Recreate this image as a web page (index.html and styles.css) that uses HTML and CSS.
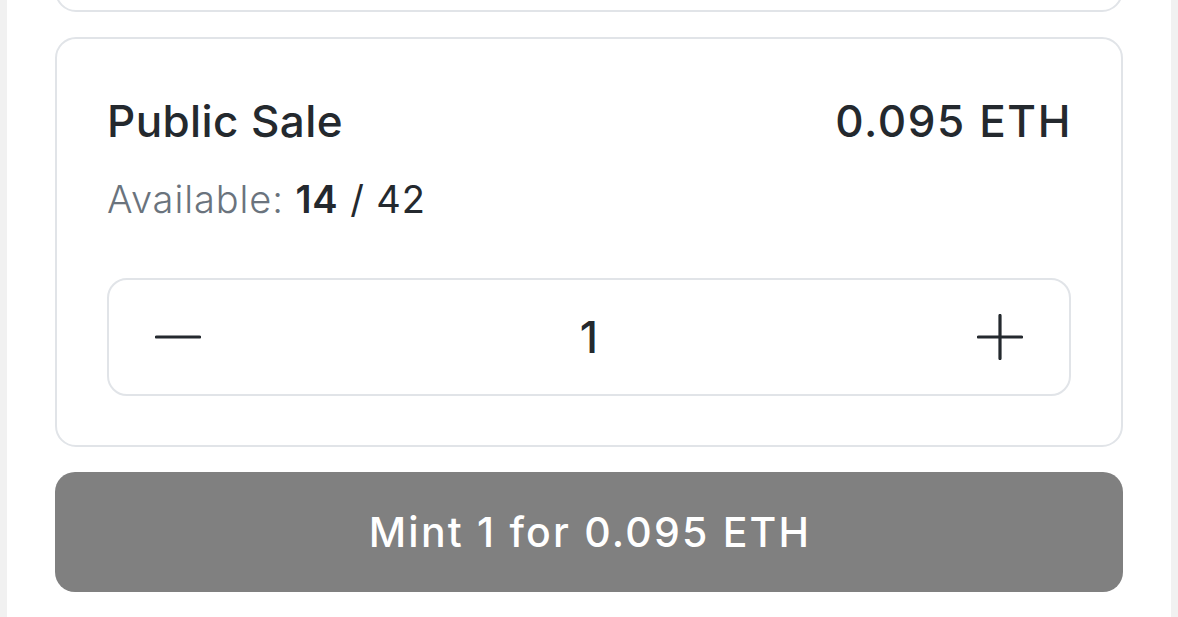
FILE: index.html
```html
<!DOCTYPE html>
<html lang="en">
<head>
<meta charset="utf-8">
<title>Public Sale</title>
<link rel="stylesheet" href="styles.css">
</head>
<body>
<div class="page">
  <div class="card card-prev"></div>
  <div class="card sale">
    <div class="sale-head">
      <div class="sale-title">Public Sale</div>
      <div class="sale-price">0.095 ETH</div>
    </div>
    <div class="avail"><span class="avail-label">Available:</span> <span class="avail-count">14</span> <span class="avail-total">/ 42</span></div>
    <div class="stepper">
      <button class="step-btn" aria-label="decrease">
        <svg width="46" height="46" viewBox="0 0 46 46"><path d="M1.5 23H44.5" stroke="#24292e" stroke-width="3.2" stroke-linecap="round" fill="none"/></svg>
      </button>
      <div class="step-value">1</div>
      <button class="step-btn" aria-label="increase">
        <svg width="46" height="46" viewBox="0 0 46 46"><path d="M1.5 23H44.5M23 1.5V44.5" stroke="#24292e" stroke-width="3.2" stroke-linecap="round" fill="none"/></svg>
      </button>
    </div>
  </div>
  <button class="mint">Mint 1 for 0.095 ETH</button>
</div>
</body>
</html>
```

FILE: styles.css
```css
html, body {
  margin: 0;
  padding: 0;
  background: #f1f1f1;
  height: 100%;
  overflow: hidden;
}
.page {
  margin: 0 7px;
  background: #ffffff;
  height: 100%;
  padding: 0 48px;
  display: flex;
  flex-direction: column;
  gap: 25px;
  font-family: Inter, "Noto Sans", sans-serif;
  color: #24292e;
}
.card {
  border: 2px solid #e1e4e8;
  border-radius: 21px;
  box-sizing: border-box;
}
.card-prev {
  margin-top: -100px;
  height: 112px;
  flex: none;
}
.sale {
  flex: none;
  padding: 56px 50px 49px;
}
.sale-head {
  display: flex;
  justify-content: space-between;
  align-items: baseline;
  font-size: 44px;
  line-height: 52px;
  font-weight: 500;
}
.sale-title {
  letter-spacing: 0.4px;
}
.sale-price {
  letter-spacing: 1.6px;
  margin-right: -1px;
}
.avail {
  margin-top: 29px;
  font-size: 38px;
  line-height: 46px;
  letter-spacing: 0.9px;
}
.avail-label {
  color: #6a737d;
  font-weight: 300;
}
.avail-count {
  font-weight: 600;
}
.avail-total {
  font-weight: 400;
}
.stepper {
  margin-top: 56px;
  height: 118px;
  box-sizing: border-box;
  border: 2px solid #e1e4e8;
  border-radius: 20px;
  display: flex;
  align-items: center;
  justify-content: space-between;
  padding: 0 46px;
}
.step-btn {
  border: 0;
  background: none;
  padding: 0;
  width: 46px;
  height: 46px;
  display: flex;
}
.step-value {
  font-size: 44px;
  font-weight: 500;
  line-height: 52px;
}
.mint {
  flex: none;
  height: 120px;
  border: 0;
  border-radius: 20px;
  background: #808080;
  color: #ffffff;
  font-family: Inter, "Noto Sans", sans-serif;
  font-size: 41px;
  font-weight: 500;
  letter-spacing: 2.2px;
  padding: 0 0 0 2px;
}
```
